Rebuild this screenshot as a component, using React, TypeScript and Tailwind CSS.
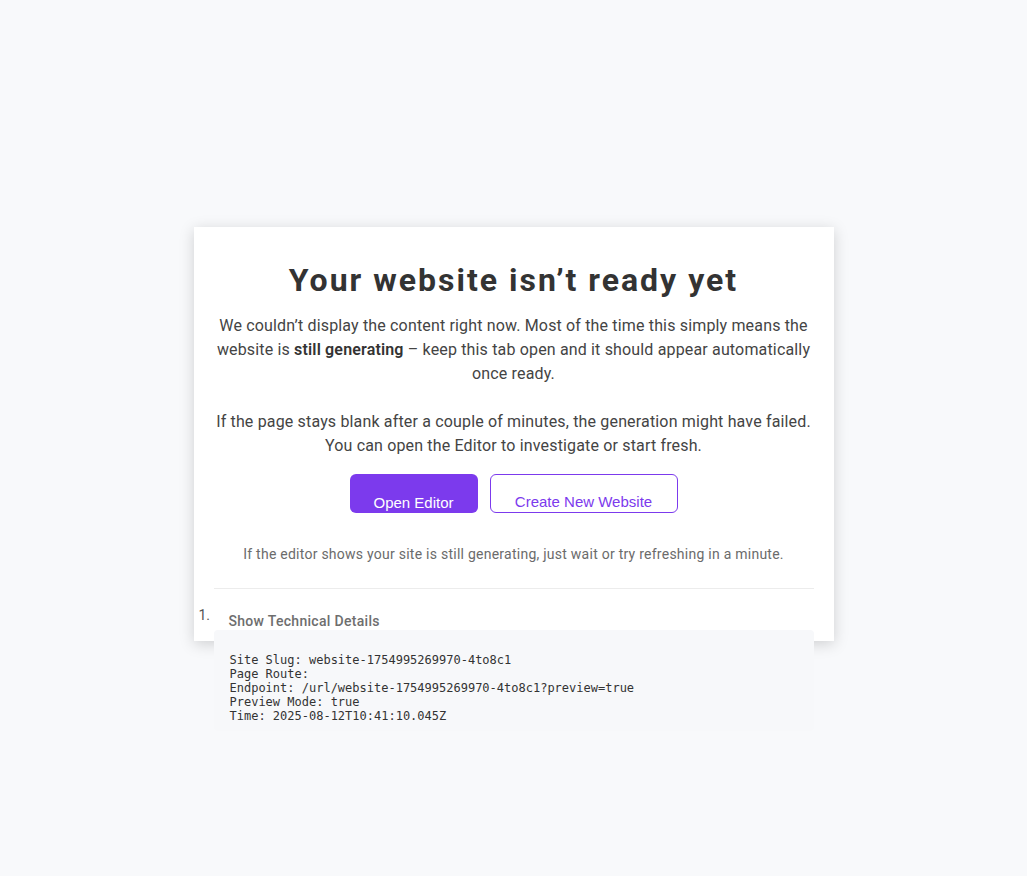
import React from "react";

const DETAILS = [
  "Site Slug: website-1754995269970-4to8c1",
  "Page Route: ",
  "Endpoint: /url/website-1754995269970-4to8c1?preview=true",
  "Preview Mode: true",
  "Time: 2025-08-12T10:41:10.045Z",
];

export default function App() {
  return (
    <div className="min-h-[876px] w-full bg-[#f8f9fb] flex items-center justify-center font-['Roboto',sans-serif]">
      {/* Card */}
      <div className="w-[640px] h-[414px] mb-[8px] bg-white shadow-[0_3px_14px_rgba(0,0,0,0.17)] px-5 pt-[33px] text-center">
        <h1 className="text-[32px] leading-[40px] font-bold text-[#333333] tracking-[2px]">
          Your website isn’t ready yet
        </h1>

        <p className="mt-[14px] text-[16px] leading-[24px] text-[#444444] tracking-[0.16px]">
          We couldn’t display the content right now. Most of the time this simply means the website is{" "}
          <strong className="font-semibold text-[#333333]">still generating</strong> – keep this tab open and it should
          appear automatically once ready.
        </p>
        <p className="mt-[24px] text-[16px] leading-[24px] text-[#444444] tracking-[0.16px]">
          If the page stays blank after a couple of minutes, the generation might have failed. You can open the Editor
          to investigate or start fresh.
        </p>

        {/* Actions */}
        <div className="mt-4 flex items-start justify-center gap-3 font-['Liberation_Sans',Arial,sans-serif]">
          <button className="h-[39px] w-[128px] rounded-md bg-[#7c3aed] pt-[18px] text-[15px] leading-[20px] text-white">
            Open Editor
          </button>
          <button className="h-[39px] w-[188px] rounded-md border border-[#7c3aed] bg-white pt-[17px] text-[15px] leading-[20px] text-[#7c3aed]">
            Create New Website
          </button>
        </div>

        <p className="mt-[31px] text-[14px] leading-[20px] text-[#6b6b6b] tracking-[0.25px]">
          If the editor shows your site is still generating, just wait or try refreshing in a minute.
        </p>

        <div className="mt-[24px] h-px bg-[#ececec]" />

        {/* Technical details */}
        <div className="relative mt-[23px] text-left">
          <span className="absolute -left-[15px] -top-[6px] text-[14px] leading-[18px] text-[#555555]">1.</span>
          <div className="pl-[15px] text-[14px] leading-[18px] font-medium text-[#6e6e6e] tracking-[0.3px]">
            Show Technical Details
          </div>
          <pre className="mt-0 rounded bg-[#f7f8fa] px-4 pt-[23px] pb-[8px] font-['DejaVu_Sans_Mono',monospace] text-[12px] leading-[14px] text-[#333333]">
            {DETAILS.join("\n")}
          </pre>
        </div>
      </div>
    </div>
  );
}
